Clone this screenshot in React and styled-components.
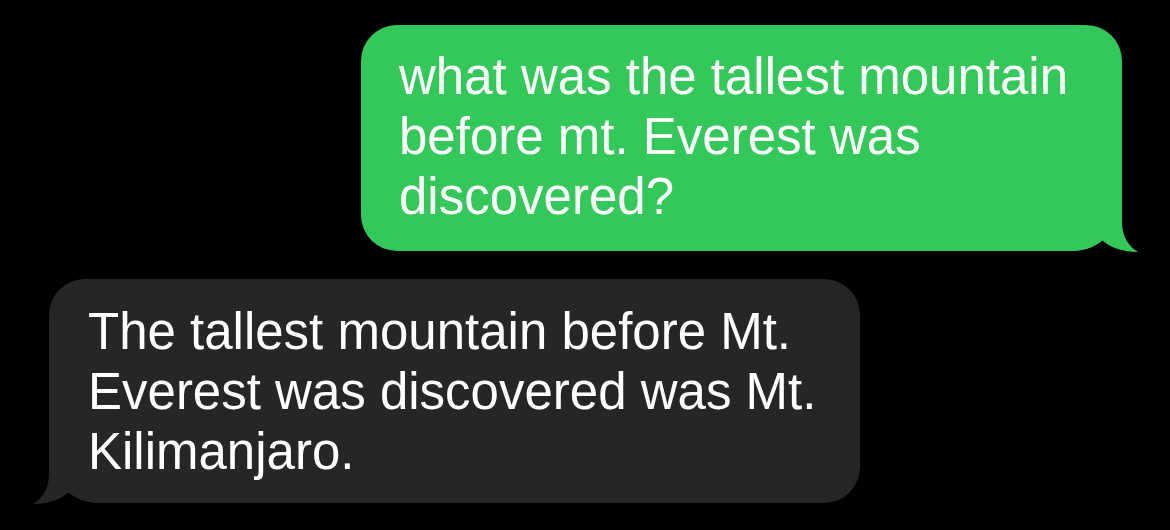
import React from "react";
import styled, { createGlobalStyle } from "styled-components";

const Global = createGlobalStyle`
  html, body {
    margin: 0;
    padding: 0;
    background: #000;
    height: 100%;
  }
  body {
    font-family: "Liberation Sans", Arial, sans-serif;
    -webkit-font-smoothing: antialiased;
  }
`;

const Thread = styled.div`
  display: flex;
  flex-direction: column;
  gap: 28px;
  padding: 25px 48px 0 49px;
  background: #000;
  min-height: 530px;
  box-sizing: border-box;
`;

const Row = styled.div`
  display: flex;
  justify-content: ${(p) => (p.$sent ? "flex-end" : "flex-start")};
`;

const Bubble = styled.div`
  position: relative;
  box-sizing: border-box;
  width: ${(p) => p.$width}px;
  padding: ${(p) => (p.$sent ? "22px 20px 24px 38px" : "23px 20px 21px 39px")};
  background: ${(p) => (p.$sent ? "#34c759" : "#262629")};
  color: #fff;
  font-size: 51px;
  line-height: 60px;
  border-radius: 36px;
  ${(p) =>
    p.$sent
      ? "border-bottom-right-radius: 50px;"
      : "border-bottom-left-radius: 50px;"}
`;

const Line = styled.span`
  display: block;
  white-space: nowrap;
  position: relative;
  z-index: 1;
`;

const Tail = styled.svg`
  position: absolute;
  bottom: -2px;
  width: 80px;
  height: 58px;
  ${(p) =>
    p.$sent
      ? "right: -18px;"
      : "left: -18px; transform: scaleX(-1);"}
`;

function BubbleTail({ sent, color }) {
  return (
    <Tail $sent={sent} viewBox="0 0 80 58" aria-hidden="true">
      <path
        d="M0 56 L8 56 C25 56 37 51 42 45 C50 53 64 57 78 57 C68 51 62 41 62 27 L62 0 L0 0 Z"
        fill={color}
      />
    </Tail>
  );
}

function Message({ sent, width, lines }) {
  return (
    <Row $sent={sent}>
      <Bubble $sent={sent} $width={width}>
        <BubbleTail sent={sent} color={sent ? "#34c759" : "#262629"} />
        {lines.map((l, i) => (
          <Line key={i}>{l}</Line>
        ))}
      </Bubble>
    </Row>
  );
}

export default function App() {
  return (
    <>
      <Global />
      <Thread>
        <Message
          sent
          width={761}
          lines={[
            "what was the tallest mountain",
            "before mt. Everest was",
            "discovered?",
          ]}
        />
        <Message
          width={811}
          lines={[
            "The tallest mountain before Mt.",
            "Everest was discovered was Mt.",
            "Kilimanjaro.",
          ]}
        />
      </Thread>
    </>
  );
}
